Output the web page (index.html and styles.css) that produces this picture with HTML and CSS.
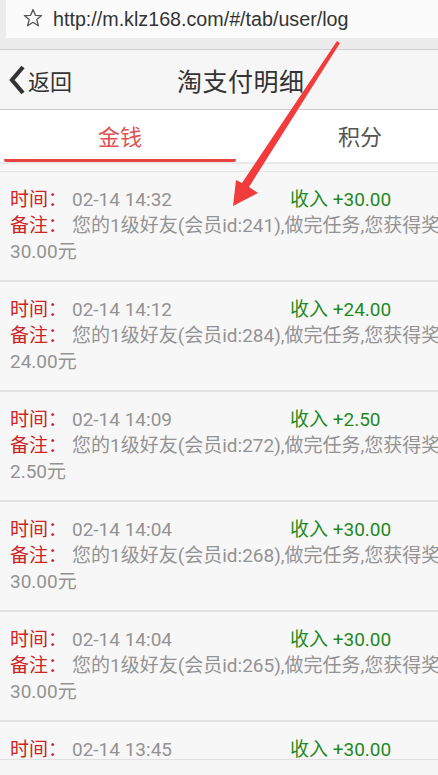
FILE: index.html
```
<!DOCTYPE html>
<html lang="zh-CN">
<head>
<meta charset="utf-8">
<title>淘支付明细</title>
<link rel="stylesheet" href="styles.css">
</head>
<body>
<div class="browserbar">
  <div class="urlbox">
    <svg class="star" width="20" height="20" viewBox="0 0 20 20"><polygon points="10,1.5 12.4,7.3 18.6,7.6 13.8,11.6 15.4,17.8 10,14.3 4.6,17.8 6.2,11.6 1.4,7.6 7.6,7.3" fill="none" stroke="#555" stroke-width="1.3" stroke-linejoin="round"/></svg>
    <span class="url">http://m.klz168.com/#/tab/user/log</span>
  </div>
</div>
<div class="page">
  <header class="navbar">
    <div class="back">
      <svg width="18" height="32" viewBox="0 0 18 32"><polyline points="15,3 4,16 15,29" fill="none" stroke="#333" stroke-width="4.2" stroke-linejoin="miter"/></svg>
      <span>返回</span>
    </div>
    <h1 class="title">淘支付明细</h1>
  </header>
  <nav class="tabs">
    <div class="tab active">金钱</div>
    <div class="tab">积分</div>
  </nav>
  <ul class="list">
    <li class="item">
      <div class="row"><span class="label">时间：</span><span class="val">02-14 14:32</span><span class="income">收入 +30.00</span></div>
      <div class="row"><span class="label">备注：</span><span class="val">您的1级好友(会员id:241),做完任务,您获得奖励</span></div>
      <div class="row"><span class="val">30.00元</span></div>
    </li>
    <li class="item">
      <div class="row"><span class="label">时间：</span><span class="val">02-14 14:12</span><span class="income">收入 +24.00</span></div>
      <div class="row"><span class="label">备注：</span><span class="val">您的1级好友(会员id:284),做完任务,您获得奖励</span></div>
      <div class="row"><span class="val">24.00元</span></div>
    </li>
    <li class="item">
      <div class="row"><span class="label">时间：</span><span class="val">02-14 14:09</span><span class="income">收入 +2.50</span></div>
      <div class="row"><span class="label">备注：</span><span class="val">您的1级好友(会员id:272),做完任务,您获得奖励</span></div>
      <div class="row"><span class="val">2.50元</span></div>
    </li>
    <li class="item">
      <div class="row"><span class="label">时间：</span><span class="val">02-14 14:04</span><span class="income">收入 +30.00</span></div>
      <div class="row"><span class="label">备注：</span><span class="val">您的1级好友(会员id:268),做完任务,您获得奖励</span></div>
      <div class="row"><span class="val">30.00元</span></div>
    </li>
    <li class="item">
      <div class="row"><span class="label">时间：</span><span class="val">02-14 14:04</span><span class="income">收入 +30.00</span></div>
      <div class="row"><span class="label">备注：</span><span class="val">您的1级好友(会员id:265),做完任务,您获得奖励</span></div>
      <div class="row"><span class="val">30.00元</span></div>
    </li>
    <li class="item">
      <div class="row"><span class="label">时间：</span><span class="val">02-14 13:45</span><span class="income">收入 +30.00</span></div>
    </li>
  </ul>
</div>
<div class="footer"></div>
<svg class="arrow" width="438" height="775" viewBox="0 0 438 775"><polygon points="337,41 340,43 249,187 258,193 233,206 236,180 242,183" fill="#f23b3b"/></svg>
</body>
</html>
```
FILE: styles.css
```
html, body {
  margin: 0;
  padding: 0;
  overflow: hidden;
  width: 438px;
  height: 775px;
  background: #f7f7f7;
  font-family: Roboto, "Noto Sans CJK SC", sans-serif;
}
.browserbar {
  height: 50px;
  background: #ececec;
  border-bottom: 1px solid #cfcfcf;
  box-sizing: border-box;
  padding-left: 6px;
}
.urlbox {
  height: 38px;
  background: #fbfbfb;
  display: flex;
  align-items: center;
  padding-left: 17px;
}
.star { margin-right: 10px; margin-top: -2px; }
.url {
  font-family: "Liberation Sans", Arial, sans-serif;
  font-size: 19.7px;
  color: #333;
}
.page { width: 480px; }
.navbar {
  height: 60px;
  box-sizing: border-box;
  background: #f6f6f6;
  border-bottom: 1px solid #cbcbcb;
  display: flex;
  align-items: center;
}
.back {
  display: flex;
  align-items: center;
  padding-left: 8px;
  width: 65px;
  font-size: 22px;
  color: #333;
}
.back span { margin-left: 2px; }
.title {
  margin: 0 0 0 104px;
  font-size: 25px;
  font-weight: normal;
  color: #333;
  letter-spacing: 0.5px;
}
.tabs {
  display: flex;
  background: #fff;
  height: 54px;
  box-sizing: border-box;
  border-bottom: 2px solid #e8e8e8;
}
.tab {
  flex: 1;
  text-align: center;
  font-size: 22px;
  color: #555;
  line-height: 52px;
  padding-top: 2px;
  margin: 0 4px;
}
.tab.active {
  color: #e05252;
  border-bottom: 3px solid #e84242;
  border-radius: 2px;
  padding-top: 6px;
  line-height: 43px;
}
.list {
  list-style: none;
  margin: 7px 0 0;
  padding: 0;
  border-top: 1px solid #e4e4e4;
}
.item {
  padding: 15px 10px 16px;
  border-bottom: 2px solid #e2e2e2;
  font-size: 19px;
  line-height: 26px;
  white-space: nowrap;
  overflow: hidden;
  height: 77px;
}
.row { display: flex; height: 26px; }
.label { color: #cc2424; margin-right: 5px; }
.val { color: #939393; }
.income {
  color: #1f8a1f;
  margin-left: auto;
  width: 180px;
}
.footer {
  position: fixed;
  left: 0;
  right: 0;
  bottom: 0;
  height: 15px;
  background: #f5f5f5;
  border-top: 1px solid #e0e0e0;
}
.arrow {
  position: absolute;
  left: 0;
  top: 0;
  pointer-events: none;
}
```
